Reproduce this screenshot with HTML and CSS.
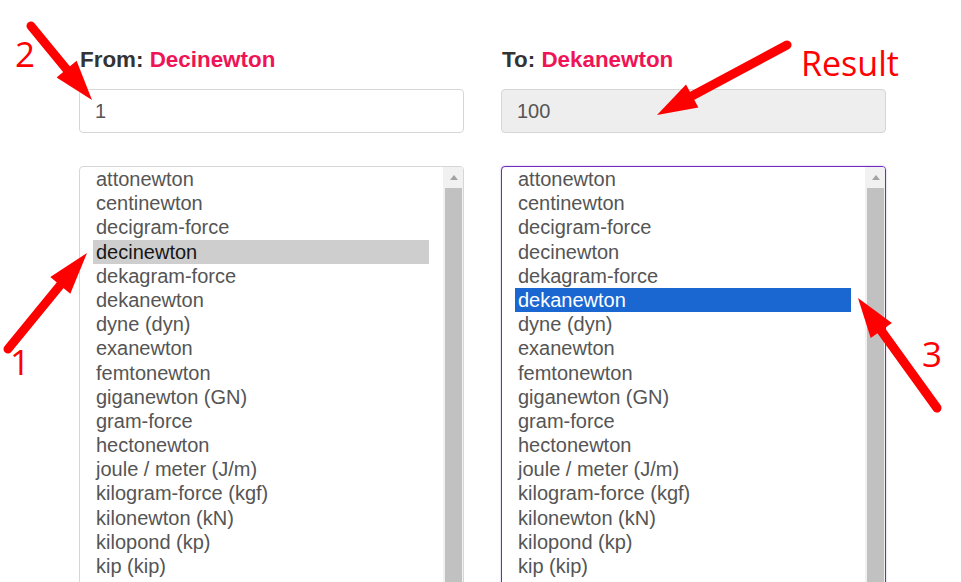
FILE: index.html
```html
<!DOCTYPE html>
<html lang="en">
<head>
<meta charset="utf-8">
<title>Force converter</title>
<link rel="stylesheet" href="styles.css">
</head>
<body>
<div class="page">
  <div class="converter">
    <div class="col">
      <label class="lbl">From: <span class="unit">Decinewton</span></label>
      <input class="field" type="text" value="1">
      <div class="listbox">
        <ul class="options">
          <li>attonewton</li>
          <li>centinewton</li>
          <li>decigram-force</li>
          <li class="sel-inactive">decinewton</li>
          <li>dekagram-force</li>
          <li>dekanewton</li>
          <li>dyne (dyn)</li>
          <li>exanewton</li>
          <li>femtonewton</li>
          <li>giganewton (GN)</li>
          <li>gram-force</li>
          <li>hectonewton</li>
          <li>joule / meter (J/m)</li>
          <li>kilogram-force (kgf)</li>
          <li>kilonewton (kN)</li>
          <li>kilopond (kp)</li>
          <li>kip (kip)</li>
        </ul>
        <div class="scrollbar"><div class="sb-btn"><span class="arrow-up"></span></div><div class="thumb"></div></div>
      </div>
    </div>
    <div class="col">
      <label class="lbl">To: <span class="unit">Dekanewton</span></label>
      <input class="field result" type="text" value="100" readonly>
      <div class="listbox focused">
        <ul class="options">
          <li>attonewton</li>
          <li>centinewton</li>
          <li>decigram-force</li>
          <li>decinewton</li>
          <li>dekagram-force</li>
          <li class="sel-active">dekanewton</li>
          <li>dyne (dyn)</li>
          <li>exanewton</li>
          <li>femtonewton</li>
          <li>giganewton (GN)</li>
          <li>gram-force</li>
          <li>hectonewton</li>
          <li>joule / meter (J/m)</li>
          <li>kilogram-force (kgf)</li>
          <li>kilonewton (kN)</li>
          <li>kilopond (kp)</li>
          <li>kip (kip)</li>
        </ul>
        <div class="scrollbar"><div class="sb-btn"><span class="arrow-up"></span></div><div class="thumb"></div></div>
      </div>
    </div>
  </div>

  <svg class="annotations" width="961" height="582" viewBox="0 0 961 582" xmlns="http://www.w3.org/2000/svg">
    <g stroke="#ff0000" stroke-width="9" stroke-linecap="round" fill="none">
      <line x1="31" y1="26" x2="68" y2="71"/>
      <line x1="8" y1="349" x2="62" y2="283"/>
      <line x1="937" y1="408" x2="880" y2="329"/>
      <line x1="787" y1="45" x2="690" y2="97"/>
    </g>
    <g fill="#ff0000">
      <polygon points="92,100 56.6,77.4 76.6,60.8"/>
      <polygon points="87,253 70.3,293.7 50.3,277.1"/>
      <polygon points="858,298 891.9,322.9 870.7,338.1"/>
      <polygon points="657,115 686,84.5 698.4,107.5"/>
    </g>
    <g class="anno-text" fill="#ff0000">
      <text x="15" y="67">2</text>
      <text x="10" y="375">1</text>
      <text x="922" y="367">3</text>
      <text x="801" y="76" class="result-text">Result</text>
    </g>
  </svg>
</div>
</body>
</html>
```

FILE: styles.css
```css
html, body {
  margin: 0;
  padding: 0;
  background: #ffffff;
}

body {
  font-family: "Liberation Sans", Arial, Helvetica, sans-serif;
  width: 961px;
  height: 582px;
  overflow: hidden;
}

.page {
  position: relative;
  width: 961px;
  height: 582px;
  overflow: hidden;
}

.converter {
  display: grid;
  grid-template-columns: 385px 385px;
  column-gap: 37px;
  padding: 46px 0 0 79px;
}

.col {
  display: flex;
  flex-direction: column;
}

.lbl {
  display: block;
  height: 27px;
  line-height: 27px;
  font-size: 22.4px;
  font-weight: bold;
  color: #333333;
  margin-bottom: 16px;
  padding-left: 1px;
  white-space: nowrap;
}

.unit {
  color: #ee1456;
}

.field {
  display: block;
  box-sizing: border-box;
  width: 385px;
  height: 44px;
  margin: 0 0 33px 0;
  padding: 0 15px;
  border: 1px solid #d6d6d6;
  border-radius: 4px;
  background: #ffffff;
  font-family: "Liberation Sans", Arial, Helvetica, sans-serif;
  font-size: 20px;
  color: #555555;
  outline: none;
}

.field.result {
  background: #eeeeee;
}

.listbox {
  display: flex;
  box-sizing: border-box;
  width: 385px;
  height: 440px;
  border: 1px solid #d6d6d6;
  border-radius: 4px;
  padding: 0 0 0 13px;
  overflow: hidden;
  background: #ffffff;
}

.listbox.focused {
  border-color: #6e2bbd;
  box-shadow: 0 0 2px rgba(120, 60, 200, 0.45);
}

.options {
  list-style: none;
  margin: 0;
  padding: 0;
  width: 336px;
  flex: none;
}

.options li {
  height: 24.2px;
  line-height: 24.2px;
  padding-left: 3px;
  font-size: 20px;
  color: #555555;
  white-space: nowrap;
}

.options li.sel-inactive {
  background: #cecece;
  color: #161616;
}

.options li.sel-active {
  background: #1a67d2;
  color: #ffffff;
}

.scrollbar {
  margin-left: auto;
  width: 20px;
  background: #f1f1f1;
  display: flex;
  flex-direction: column;
}

.sb-btn {
  height: 21px;
  display: flex;
  align-items: center;
  justify-content: center;
  flex: none;
}

.arrow-up {
  width: 0;
  height: 0;
  border-left: 4.5px solid transparent;
  border-right: 4.5px solid transparent;
  border-bottom: 5px solid #a3a3a3;
  margin-left: 1px;
}

.thumb {
  flex: 1;
  margin-left: 2px;
  margin-right: 1px;
  background: #c1c1c1;
}

.annotations {
  position: absolute;
  left: 0;
  top: 0;
  pointer-events: none;
}

.anno-text text {
  font-family: "Open Sans", "Noto Sans", sans-serif;
  font-size: 35px;
}

.anno-text .result-text {
  font-size: 34px;
}
```
